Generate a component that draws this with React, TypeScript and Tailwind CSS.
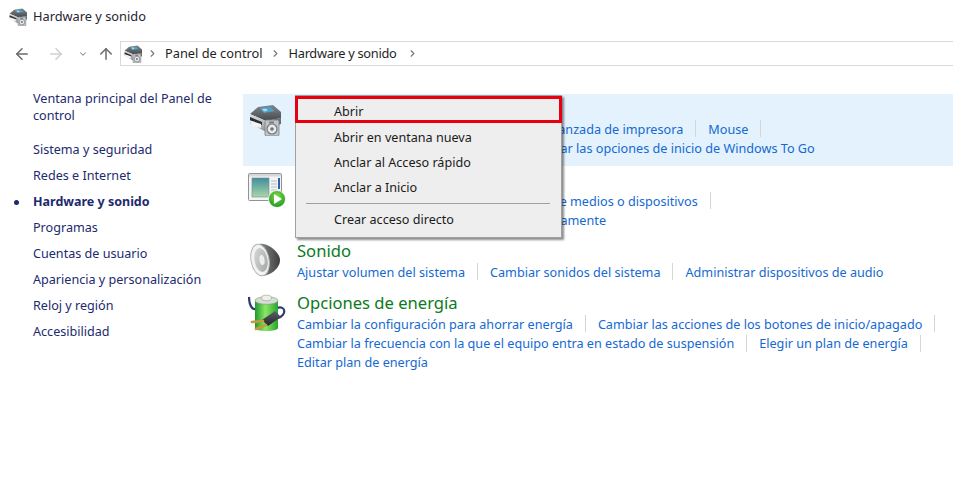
import React from "react";
import { ArrowLeft, ArrowRight, ArrowUp, ChevronDown, ChevronRight } from "lucide-react";

function HardwareIcon({ size = 32, id = "a" }: { size?: number; id?: string }) {
  return (
    <svg width={size} height={size} viewBox="0 0 32 32">
      <defs>
        <linearGradient id={`hw1${id}`} x1="0" y1="0" x2="0" y2="1">
          <stop offset="0" stopColor="#83878b" />
          <stop offset="1" stopColor="#44484d" />
        </linearGradient>
        <linearGradient id={`hw2${id}`} x1="0" y1="0" x2="0" y2="1">
          <stop offset="0" stopColor="#dfe1e3" />
          <stop offset="1" stopColor="#8d9296" />
        </linearGradient>
      </defs>
      <path d="M9 3 L24 1 L32 8 L32 14 L17 17 L1 10 Z" fill={`url(#hw1${id})`} />
      <path d="M11 4 L21 3 L26 7 L15 9 Z" fill="#4f9fc9" />
      <path d="M13 5 L17 4.5 L19 6.5 L15 7.5 Z" fill="#a4dcef" />
      <path d="M1 10 L17 17 L17 28 L1 19 Z" fill={`url(#hw2${id})`} />
      <path d="M1 13 L13 18 L13 21 L1 17 Z" fill="#2a2d31" />
      <path d="M0 16 L12 20 L12 24 L4 22 Z" fill="#f4f4f4" />
      <path d="M17 17 L32 14 L32 20 L17 26 Z" fill="#6a6f74" />
      <rect x="16" y="16" width="14" height="16" rx="1.5" fill="#c0c4c6" stroke="#7a7f83" strokeWidth="0.8" />
      <circle cx="23" cy="25" r="5" fill="#e7e9ea" stroke="#74797d" strokeWidth="1.2" />
      <circle cx="23" cy="25" r="1.8" fill="#6d7377" />
      <rect x="20" y="17.5" width="5" height="2" fill="#787d82" />
    </svg>
  );
}

function AutoplayIcon() {
  return (
    <svg width="38" height="35" viewBox="0 0 38 35">
      <defs>
        <linearGradient id="ap1" x1="0" y1="0" x2="0" y2="1">
          <stop offset="0" stopColor="#3f8f9c" />
          <stop offset="1" stopColor="#a9d6a8" />
        </linearGradient>
        <radialGradient id="ap2" cx="0.5" cy="0.35" r="0.7">
          <stop offset="0" stopColor="#7fdc4a" />
          <stop offset="1" stopColor="#18901f" />
        </radialGradient>
      </defs>
      <rect x="0.5" y="0.5" width="33" height="27" rx="1" fill="#f3f4f5" stroke="#8e9396" />
      <rect x="1" y="1" width="32" height="2.5" fill="#d5d8da" />
      <rect x="4" y="5" width="17" height="19" fill="url(#ap1)" stroke="#7d8589" strokeWidth="0.6" />
      <path d="M23 8h6M23 11h6M23 14h6M23 17h6M23 20h6" stroke="#b8bcbf" strokeWidth="1" />
      <rect x="30" y="5" width="2" height="11" fill="#2b63a6" />
      <circle cx="29" cy="26" r="8.5" fill="url(#ap2)" stroke="#fff" strokeWidth="0.8" />
      <path d="M26 21 L34 26 L26 31 Z" fill="#fff" />
    </svg>
  );
}

function SpeakerIcon() {
  return (
    <svg width="30" height="34" viewBox="0 0 30 34">
      <defs>
        <linearGradient id="sp1" x1="0" y1="0" x2="1" y2="1">
          <stop offset="0" stopColor="#d8dada" />
          <stop offset="1" stopColor="#a2a5a5" />
        </linearGradient>
        <linearGradient id="sp2" x1="0" y1="0" x2="1" y2="0">
          <stop offset="0" stopColor="#8a8c8c" />
          <stop offset="1" stopColor="#3d3f40" />
        </linearGradient>
      </defs>
      <path d="M9 1 C17 -1 30 9 30 17 C30 26 19 34 9 33 Z" fill="url(#sp2)" />
      <ellipse cx="10" cy="17" rx="9" ry="16" transform="rotate(-10 10 17)" fill="#f2f3f3" stroke="#b5b8b8" />
      <ellipse cx="11" cy="17" rx="6.5" ry="12" transform="rotate(-10 11 17)" fill="url(#sp1)" />
      <ellipse cx="12" cy="17" rx="2.5" ry="5" transform="rotate(-10 12 17)" fill="#eceeee" />
    </svg>
  );
}

function PowerIcon() {
  return (
    <svg width="38" height="38" viewBox="0 0 38 38">
      <defs>
        <linearGradient id="pw1" x1="0" y1="0" x2="1" y2="0">
          <stop offset="0" stopColor="#1f9a2e" />
          <stop offset="0.45" stopColor="#8be765" />
          <stop offset="1" stopColor="#27a332" />
        </linearGradient>
        <linearGradient id="pw2" x1="0" y1="0" x2="0" y2="1">
          <stop offset="0" stopColor="#5b5f68" />
          <stop offset="1" stopColor="#23252c" />
        </linearGradient>
      </defs>
      <path d="M1 3 C1 11 4 16 8 15" fill="none" stroke="#2e3a70" strokeWidth="2.2" />
      <path d="M29 14 C38 11 39 21 30 24" fill="none" stroke="#2e3a70" strokeWidth="2.2" />
      <path d="M7 7 C7 4 30 4 30 7 L30 34 C30 38 7 38 7 34 Z" fill="url(#pw1)" />
      <ellipse cx="18.5" cy="6.5" rx="11.5" ry="3.8" fill="#d8dcd6" stroke="#7d9a78" strokeWidth="0.6" />
      <ellipse cx="18.5" cy="4" rx="5" ry="2.8" fill="#eef0ea" stroke="#8f9a8a" strokeWidth="0.6" />
      <path d="M14 26 L27 17 L33 23 L20 32 Z" fill="url(#pw2)" />
      <path d="M15 27 L4 28 M18 31 L8 35" stroke="#c79a3e" strokeWidth="2.6" strokeLinecap="round" />
    </svg>
  );
}

function Sep() {
  return <span className="mx-3 inline-block h-[17px] w-px shrink-0 bg-[#d6d6d6]" />;
}

function Links({ items, trailing = false, indent = "" }: { items: string[]; trailing?: boolean; indent?: string }) {
  return (
    <div className={`flex h-[19.4px] items-center whitespace-nowrap text-[12.65px] text-[#1569d2] ${indent}`}>
      {items.map((t, i) => (
        <React.Fragment key={t}>
          {i > 0 && <Sep />}
          <span>{t}</span>
        </React.Fragment>
      ))}
      {trailing && <Sep />}
    </div>
  );
}

function Section({
  icon,
  title,
  rows,
  active = false,
  pitch,
  iconBox,
}: {
  icon: React.ReactNode;
  title: string;
  rows: { items: string[]; trailing?: boolean; indent?: string }[];
  active?: boolean;
  pitch: string;
  iconBox: string;
}) {
  return (
    <div className={`flex ${pitch} ${active ? "bg-[#e3f2fd]" : ""}`}>
      <div className={`flex w-[54px] shrink-0 ${iconBox}`}>{icon}</div>
      <div className="pt-[3px]">
        <div className="h-[22.3px] text-[16.6px] leading-[21px] text-[#0b7a23]">{title}</div>
        {rows.map((r, i) => (
          <Links key={i} items={r.items} trailing={r.trailing} indent={r.indent} />
        ))}
      </div>
    </div>
  );
}

const side = [
  "Sistema y seguridad",
  "Redes e Internet",
  "Hardware y sonido",
  "Programas",
  "Cuentas de usuario",
  "Apariencia y personalización",
  "Reloj y región",
  "Accesibilidad",
];

export default function App() {
  return (
    <div
      className="relative h-[488px] w-[953px] overflow-hidden bg-white text-[12.6px] text-[#222]"
      style={{ fontFamily: '"Noto Sans", sans-serif' }}
    >
      <div className="flex h-[34px] items-center pl-[9px]">
        <HardwareIcon size={18} id="t" />
        <span className="ml-[6px] text-[12.8px] text-[#1f2430]">Hardware y sonido</span>
      </div>

      <div className="mt-[7px] flex h-[25px] items-center">
        <div className="flex w-[120px] shrink-0 items-center pl-[13px]">
          <ArrowLeft size={18} strokeWidth={2} className="text-[#6a6a6a]" />
          <ArrowRight size={18} strokeWidth={2} className="ml-[16px] text-[#cfcfcf]" />
          <ChevronDown size={10} strokeWidth={2.5} className="ml-[13px] text-[#8a8a8a]" />
          <ArrowUp size={18} strokeWidth={2} className="ml-[9px] text-[#6a6a6a]" />
        </div>
        <div className="flex h-[25px] grow items-center border border-r-0 border-[#d9d9d9] pl-[3px] text-[12.8px] text-[#1f1f1f]">
          <HardwareIcon size={18} id="n" />
          <ChevronRight size={11} strokeWidth={2.5} className="ml-[5px] text-[#777]" />
          <span className="ml-[7px]">Panel de control</span>
          <ChevronRight size={11} strokeWidth={2.5} className="ml-[7px] text-[#777]" />
          <span className="ml-[8px] tracking-[-0.3px]">Hardware y sonido</span>
          <ChevronRight size={11} strokeWidth={2.5} className="ml-[11px] text-[#777]" />
        </div>
      </div>

      <div className="mt-[24px] flex">
        <aside className="w-[243px] shrink-0 pl-[33px] text-[#1c2a6e]">
          <div className="w-[190px] leading-[17px]">Ventana principal del Panel de control</div>
          <div className="mt-[13px] flex flex-col">
            {side.map((s) => (
              <div key={s} className="relative flex h-[26px] items-center">
                {s === "Hardware y sonido" && (
                  <span className="absolute left-[-19px] h-[5px] w-[5px] rounded-full bg-[#1c2a6e]" />
                )}
                <span className={s === "Hardware y sonido" ? "text-[12.5px] font-bold" : ""}>{s}</span>
              </div>
            ))}
          </div>
        </aside>

        <main className="mt-[4px] grow">
          <Section
            active
            pitch="h-[72px]"
            iconBox="pl-[6px] pt-[10px]"
            icon={<HardwareIcon />}
            title="Dispositivos e impresoras"
            rows={[
              {
                items: ["Agregar un dispositivo", "Configuración avanzada de impresora", "Mouse"],
                trailing: true,
                indent: "pl-[2px]",
              },
              { items: ["Administrador de dispositivos", "Cambiar las opciones de inicio de Windows To Go"], indent: "pl-[24px]" },
            ]}
          />
          <Section
            pitch="h-[71px]"
            iconBox="pl-[5px] pt-[7px]"
            icon={<AutoplayIcon />}
            title="Reproducción automática"
            rows={[
              {
                items: ["Cambiar la configuración predeterminada de medios o dispositivos"],
                trailing: true,
                indent: "pl-[3px]",
              },
              { items: ["Reproducir CD u otros medios automáticamente"], indent: "pl-[22px]" },
            ]}
          />
          <Section
            pitch="h-[52px]"
            iconBox="pl-[7px] pt-[6px]"
            icon={<SpeakerIcon />}
            title="Sonido"
            rows={[{ items: ["Ajustar volumen del sistema", "Cambiar sonidos del sistema", "Administrar dispositivos de audio"] }]}
          />
          <Section
            pitch="h-[80px]"
            iconBox="pl-[5px] pt-[5px]"
            icon={<PowerIcon />}
            title="Opciones de energía"
            rows={[
              {
                items: [
                  "Cambiar la configuración para ahorrar energía",
                  "Cambiar las acciones de los botones de inicio/apagado",
                ],
                trailing: true,
              },
              {
                items: ["Cambiar la frecuencia con la que el equipo entra en estado de suspensión", "Elegir un plan de energía"],
                trailing: true,
              },
              { items: ["Editar plan de energía"] },
            ]}
          />
        </main>
      </div>

      <div className="absolute left-[295px] top-[95px] h-[143px] w-[267px] border border-[#a0a0a0] bg-[#eeeeee] text-[#1a1a1a] shadow-[2px_2px_2px_rgba(0,0,0,0.45)]">
        <div className="-mx-px flex h-[27px] items-center border-[3px] border-[#e8000f] pl-[36px] pt-[6px]">Abrir</div>
        <div className="mt-[3px] flex h-[25px] items-center pl-[38px]">Abrir en ventana nueva</div>
        <div className="flex h-[25px] items-center pl-[38px]">Anclar al Acceso rápido</div>
        <div className="flex h-[25px] items-center pl-[38px]">Anclar a Inicio</div>
        <div className="mx-[10px] mt-[2px] h-px w-[244px] bg-[#a0a0a0]" />
        <div className="mt-[4px] flex h-[25px] items-center pl-[38px]">Crear acceso directo</div>
      </div>
    </div>
  );
}
